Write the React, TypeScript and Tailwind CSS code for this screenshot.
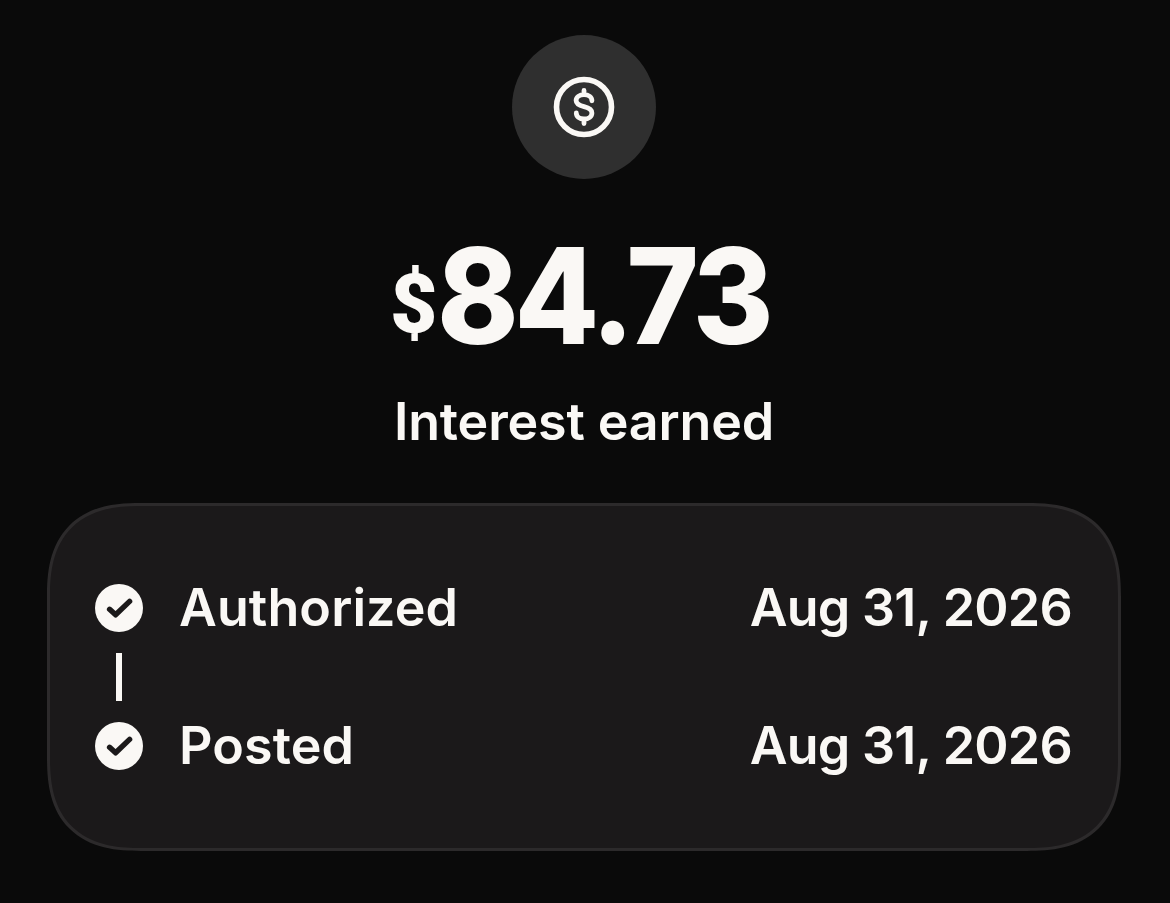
import React from 'react';

type StatusStep = {
  label: string;
  date: string;
};

const steps: StatusStep[] = [
  { label: 'Authorized', date: 'Aug 31, 2026' },
  { label: 'Posted', date: 'Aug 31, 2026' },
];

const DollarIcon: React.FC = () => (
  <svg
    className="size-[62px]"
    viewBox="-1 -1 62 62"
    fill="none"
    stroke="currentColor"
    strokeLinecap="round"
    strokeLinejoin="round"
  >
    <circle cx="30" cy="30" r="27.5" strokeWidth="5.6" />
    <path
      d="M37.9 23.8C37.9 20.2 34.6 17.7 30 17.7s-7.9 2.4-7.9 5.9c0 3.7 3.2 4.9 7.9 6s7.9 2.5 7.9 6.3c0 3.6-3.3 6.1-7.9 6.1s-7.7-2.5-7.7-6M30 13.4v4M30 42.5v4"
      strokeWidth="4.8"
    />
  </svg>
);

const CheckIcon: React.FC = () => (
  <svg className="size-12" viewBox="0 0 48 48" fill="none">
    <circle cx="24" cy="24" r="24" fill="#faf8f5" />
    <path
      d="m14.6 25.3 6 5.5 14-13.4"
      stroke="#1b191a"
      strokeWidth="5.4"
      strokeLinecap="round"
      strokeLinejoin="round"
    />
  </svg>
);

const StatusRow: React.FC<{ step: StatusStep }> = ({ step }) => (
  <div className="flex h-12 items-center">
    <CheckIcon />
    <span className="ml-9 tracking-[0.1px]">{step.label}</span>
    <span className="mr-px ml-auto tracking-[-0.75px]">{step.date}</span>
  </div>
);

export default function App() {
  return (
    <div className="flex h-[903px] flex-col items-center overflow-hidden bg-[#0a0a0a] pt-[35px] pr-[2px] font-['Inter',sans-serif] text-[52px] font-semibold text-[#faf8f5]">
      <div className="flex size-36 items-center justify-center rounded-full bg-[#2f2f2f]">
        <DollarIcon />
      </div>
      <div className="mt-[39px] flex h-[150px] w-[388px] items-start">
        <span className="w-[47px] pt-[16px] font-['Roboto',sans-serif] text-[82px] leading-[140px] font-black">
          $
        </span>
        <span className="origin-left scale-x-[0.926] text-[133px] leading-[156px] font-extrabold tracking-[-4.5px]">
          84.73
        </span>
      </div>
      <div className="mt-[24px] h-[60px] leading-[60px] tracking-[-0.15px]">
        Interest earned
      </div>
      <div className="mt-[51px] h-[348px] w-[1074px] rounded-[94px] border-3 border-[#2c2a2b] bg-[#1b191a] px-[45px] pt-[78px] leading-[50px] [corner-shape:superellipse(1.35)]">
        <StatusRow step={steps[0]} />
        <div className="my-[21px] ml-[21px] h-12 w-[6px] bg-[#faf8f5]" />
        <StatusRow step={steps[1]} />
      </div>
    </div>
  );
}
